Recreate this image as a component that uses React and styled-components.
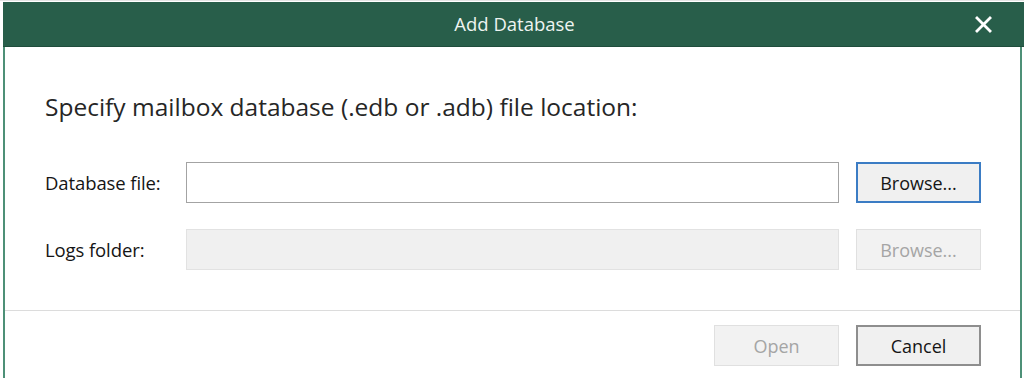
import React from "react";
import styled, { createGlobalStyle } from "styled-components";

const Global = createGlobalStyle`
  html, body { margin: 0; padding: 0; background: #ffffff; }
  body { font-family: "Open Sans", "Noto Sans", sans-serif; overflow: hidden; }
  * { box-sizing: border-box; }
`;

const Page = styled.div`
  width: 1024px;
  height: 378px;
  padding: 1px 0 0 3px;
  border-top: 1px solid #e4e4e4;
  display: flex;
  flex-direction: column;
`;

const TitleBar = styled.div`
  height: 45px;
  flex: none;
  background: #285e4a;
  border-bottom: 1px solid #1f4d3c;
  display: flex;
  align-items: center;
  justify-content: center;
  position: relative;
`;

const Title = styled.div`
  color: #eef4f1;
  font-size: 18.5px;
  line-height: 24px;
  margin-left: 2px;
`;

const CloseButton = styled.button`
  position: absolute;
  right: 31px;
  top: 12px;
  width: 20px;
  height: 20px;
  border: none;
  background: transparent;
  padding: 0;
  display: flex;
  align-items: center;
  justify-content: center;
`;

const Window = styled.div`
  flex: 1;
  margin-right: 2px;
  border-left: 2px solid #4d9077;
  border-right: 2px solid #4d9077;
  display: flex;
  flex-direction: column;
`;

const Content = styled.div`
  padding: 45px 39px 0 40px;
  display: flex;
  flex-direction: column;
`;

const Heading = styled.div`
  height: 30px;
  line-height: 30px;
  font-size: 24.5px;
  color: #262626;
  margin-bottom: 40px;
`;

const Rows = styled.div`
  display: flex;
  flex-direction: column;
  gap: 26px;
`;

const Row = styled.div`
  display: flex;
  align-items: center;
  height: 41px;
`;

const Label = styled.div`
  width: 141px;
  flex: none;
  font-size: 18.5px;
  color: #151515;
  letter-spacing: -0.1px;
`;

const Input = styled.div`
  width: 653px;
  height: 41px;
  flex: none;
  background: ${(p) => (p.disabled ? "#f0f0f0" : "#ffffff")};
  border: 1px solid ${(p) => (p.disabled ? "#e2e2e2" : "#a3a3a3")};
`;

const Button = styled.button`
  width: 125px;
  height: 41px;
  flex: none;
  font-family: "Open Sans", "Noto Sans", sans-serif;
  font-size: 18px;
  padding: 0;
  background: ${(p) => (p.disabled ? "#f2f2f2" : "#f0f0f0")};
  color: ${(p) => (p.disabled ? "#a5a5a5" : "#151515")};
  border: ${(p) =>
    p.variant === "focus"
      ? "2px solid #3b7cc4"
      : p.variant === "default"
      ? "2px solid #8e8e8e"
      : "1px solid #e0e0e0"};
`;

const Gap = styled.div`
  width: 17px;
  flex: none;
`;

const Separator = styled.div`
  height: 1px;
  background: #dcdcdc;
  margin-top: 40px;
`;

const Footer = styled.div`
  display: flex;
  justify-content: flex-end;
  gap: 17px;
  padding: 14px 39px 0 0;
`;

export default function App() {
  return (
    <>
      <Global />
      <Page>
        <TitleBar>
          <Title>Add Database</Title>
          <CloseButton aria-label="Close">
            <svg width="17" height="17" viewBox="0 0 17 17">
              <path d="M2 2 L15 15 M15 2 L2 15" stroke="#ffffff" strokeWidth="2.8" strokeLinecap="square" />
            </svg>
          </CloseButton>
        </TitleBar>
        <Window>
          <Content>
            <Heading>Specify mailbox database (.edb or .adb) file location:</Heading>
            <Rows>
              <Row>
                <Label>Database file:</Label>
                <Input />
                <Gap />
                <Button variant="focus">Browse...</Button>
              </Row>
              <Row>
                <Label>Logs folder:</Label>
                <Input disabled />
                <Gap />
                <Button disabled>Browse...</Button>
              </Row>
            </Rows>
          </Content>
          <Separator />
          <Footer>
            <Button disabled>Open</Button>
            <Button variant="default">Cancel</Button>
          </Footer>
        </Window>
      </Page>
    </>
  );
}
